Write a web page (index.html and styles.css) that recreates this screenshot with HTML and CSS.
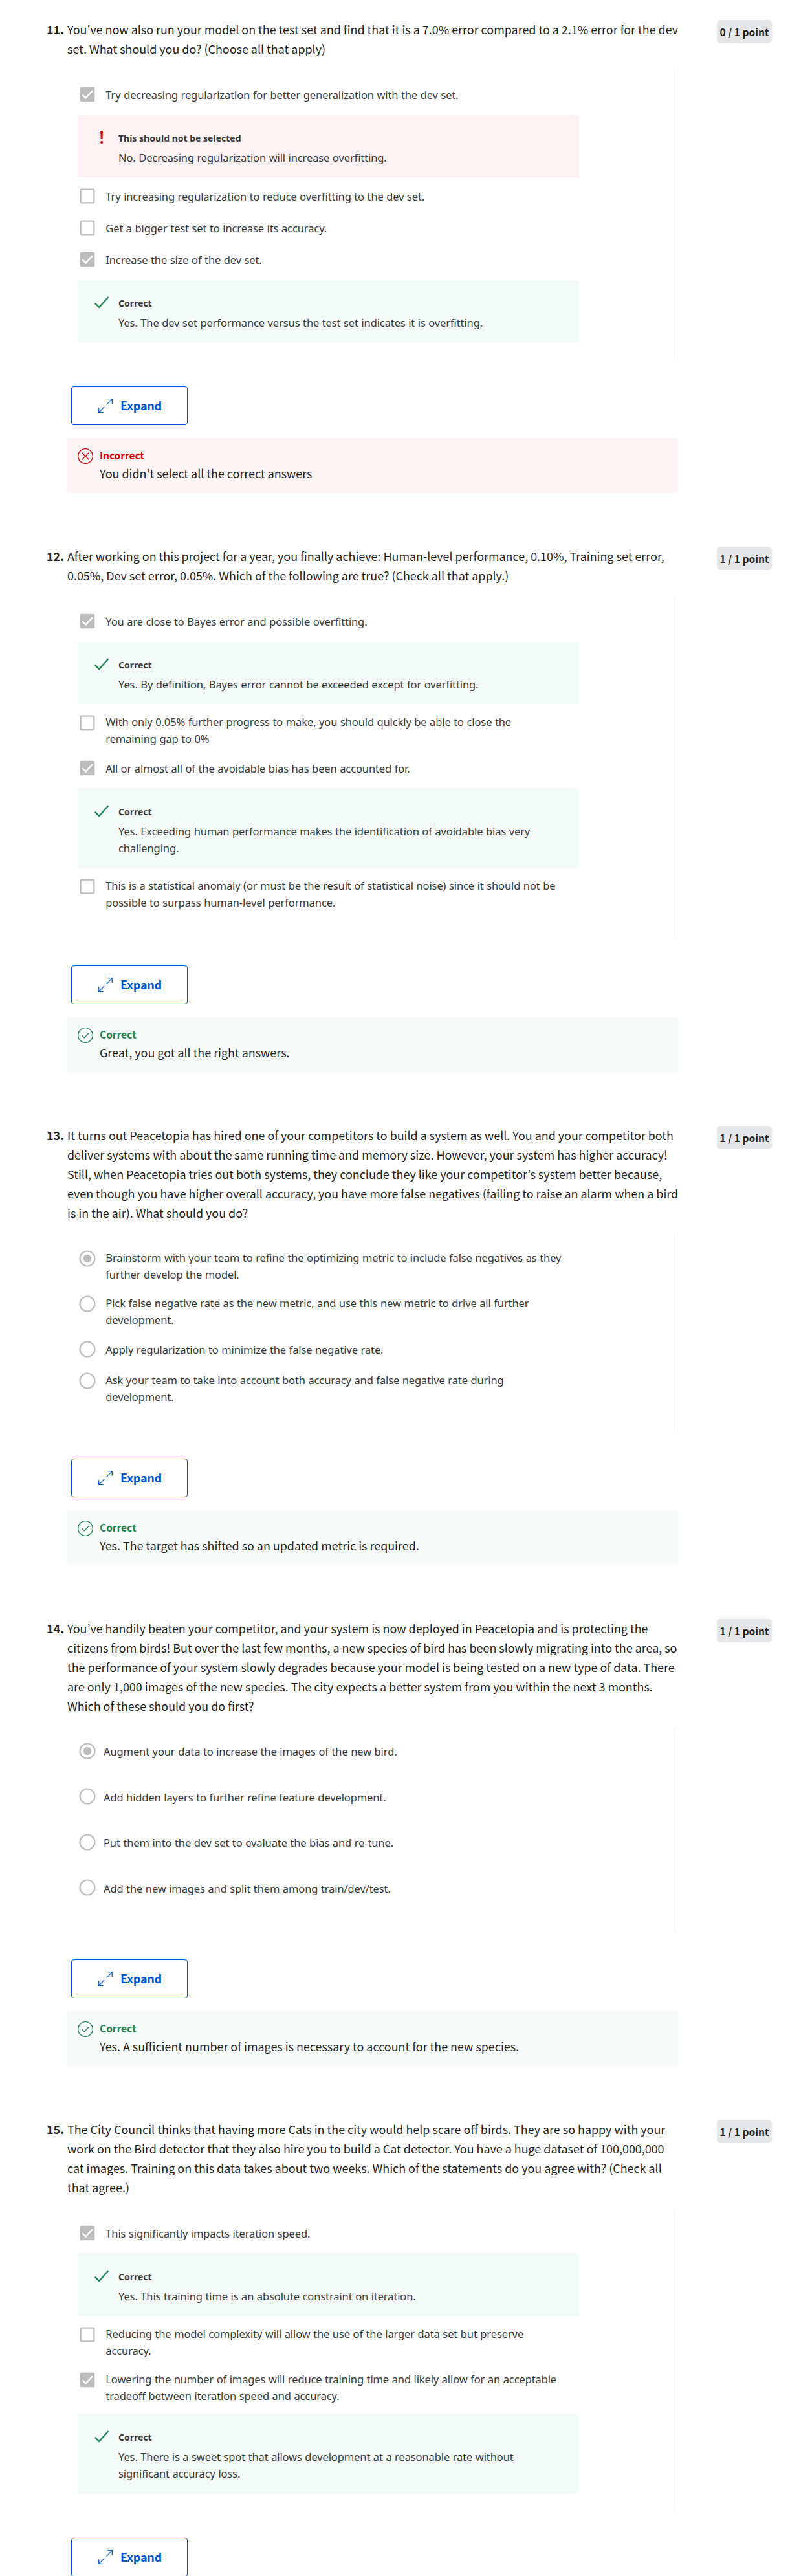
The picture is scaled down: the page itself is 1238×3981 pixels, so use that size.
FILE: index.html
```html
<!DOCTYPE html>
<html lang="en">
<head>
<meta charset="utf-8">
<title>Quiz feedback</title>
<link rel="stylesheet" href="styles.css">
</head>
<body>
<svg class="defs" aria-hidden="true">
  <symbol id="box-on" viewBox="0 0 24 24"><rect x=".7" y=".7" width="22.6" height="22.6" rx="2" fill="#bdbdbd"/><path d="M4.2 12.4l5.3 5L19.8 6.3" fill="none" stroke="#fff" stroke-width="2.5"/></symbol>
  <symbol id="box-off" viewBox="0 0 24 24"><rect x="1.7" y="1.7" width="20.6" height="20.6" rx="1.4" fill="#fff" stroke="#bdbdbd" stroke-width="2.2"/></symbol>
  <symbol id="radio-on" viewBox="0 0 26 26"><circle cx="13" cy="13" r="11.5" fill="none" stroke="#bdbdbd" stroke-width="2.2"/><circle cx="13" cy="13" r="6.2" fill="#bdbdbd"/></symbol>
  <symbol id="radio-off" viewBox="0 0 26 26"><circle cx="13" cy="13" r="11.5" fill="none" stroke="#bdbdbd" stroke-width="2.2"/></symbol>
  <symbol id="tick" viewBox="0 0 24 20"><path d="M1.8 11.6l6.5 6.4L22.4 2" fill="none" stroke="#1f8354" stroke-width="2.3"/></symbol>
  <symbol id="bang" viewBox="0 0 24 20"><path d="M10.2 0h3.8l-.5 13h-2.8z" fill="#d30001"/><circle cx="12.1" cy="18" r="2" fill="#d30001"/></symbol>
  <symbol id="expand" viewBox="0 0 22 22"><path d="M.7 14.3v7h7M.9 21.1L9.2 12.8M14.3.7h7v7M21.1.9L12.6 9.4" fill="none" stroke="#0056d2" stroke-width="1.25"/></symbol>
  <symbol id="ok" viewBox="0 0 24 24"><circle cx="12" cy="12" r="11.3" fill="none" stroke="#1f8354" stroke-width="1.3"/><path d="M6.8 12.6l3.5 3.2 7-7.4" fill="none" stroke="#1f8354" stroke-width="1.3"/></symbol>
  <symbol id="bad" viewBox="0 0 24 24"><circle cx="12" cy="12" r="11.3" fill="none" stroke="#d30001" stroke-width="1.3"/><path d="M6.8 6.8l10.4 10.4M17.2 6.8L6.8 17.2" fill="none" stroke="#d30001" stroke-width="1.3"/></symbol>
</svg>
<main class="quiz">

<section class="question">
  <header class="prompt">
    <b class="number">11.</b>
    <p class="stem">You’ve now also run your model on the test set and find that it is a 7.0% error compared to a 2.1% error for the dev<br>set. What should you do? (Choose all that apply)</p>
    <span class="points">0 / 1 point</span>
  </header>
  <div class="answers answers-11">
    <div class="option"><svg class="mark"><use href="#box-on"/></svg><p>Try decreasing regularization for better generalization with the dev set.</p></div>
    <div class="note note-bad"><svg class="note-icon"><use href="#bang"/></svg><div><h4>This should not be selected</h4><p>No. Decreasing regularization will increase overfitting.</p></div></div>
    <div class="option"><svg class="mark"><use href="#box-off"/></svg><p>Try increasing regularization to reduce overfitting to the dev set.</p></div>
    <div class="option"><svg class="mark"><use href="#box-off"/></svg><p>Get a bigger test set to increase its accuracy.</p></div>
    <div class="option"><svg class="mark"><use href="#box-on"/></svg><p>Increase the size of the dev set.</p></div>
    <div class="note"><svg class="note-icon"><use href="#tick"/></svg><div><h4>Correct</h4><p>Yes. The dev set performance versus the test set indicates it is overfitting.</p></div></div>
  </div>
  <button class="expand"><svg class="expand-icon"><use href="#expand"/></svg><span>Expand</span></button>
  <div class="result result-bad"><svg class="result-icon"><use href="#bad"/></svg><div><h3>Incorrect</h3><p>You didn't select all the correct answers</p></div></div>
</section>

<section class="question">
  <header class="prompt">
    <b class="number">12.</b>
    <p class="stem">After working on this project for a year, you finally achieve: Human-level performance, 0.10%, Training set error,<br>0.05%, Dev set error, 0.05%. Which of the following are true? (Check all that apply.)</p>
    <span class="points">1 / 1 point</span>
  </header>
  <div class="answers answers-12">
    <div class="option"><svg class="mark"><use href="#box-on"/></svg><p>You are close to Bayes error and possible overfitting.</p></div>
    <div class="note"><svg class="note-icon"><use href="#tick"/></svg><div><h4>Correct</h4><p>Yes. By definition, Bayes error cannot be exceeded except for overfitting.</p></div></div>
    <div class="option option-two"><svg class="mark"><use href="#box-off"/></svg><p>With only 0.05% further progress to make, you should quickly be able to close the<br>remaining gap to 0%</p></div>
    <div class="option"><svg class="mark"><use href="#box-on"/></svg><p>All or almost all of the avoidable bias has been accounted for.</p></div>
    <div class="note"><svg class="note-icon"><use href="#tick"/></svg><div><h4>Correct</h4><p>Yes. Exceeding human performance makes the identification of avoidable bias very<br>challenging.</p></div></div>
    <div class="option option-two"><svg class="mark"><use href="#box-off"/></svg><p>This is a statistical anomaly (or must be the result of statistical noise) since it should not be<br>possible to surpass human-level performance.</p></div>
  </div>
  <button class="expand"><svg class="expand-icon"><use href="#expand"/></svg><span>Expand</span></button>
  <div class="result"><svg class="result-icon"><use href="#ok"/></svg><div><h3>Correct</h3><p>Great, you got all the right answers.</p></div></div>
</section>

<section class="question">
  <header class="prompt">
    <b class="number">13.</b>
    <p class="stem">It turns out Peacetopia has hired one of your competitors to build a system as well. You and your competitor both<br>deliver systems with about the same running time and memory size. However, your system has higher accuracy!<br>Still, when Peacetopia tries out both systems, they conclude they like your competitor’s system better because,<br>even though you have higher overall accuracy, you have more false negatives (failing to raise an alarm when a bird<br>is in the air). What should you do?</p>
    <span class="points">1 / 1 point</span>
  </header>
  <div class="answers answers-13">
    <div class="option option-two"><svg class="mark radio"><use href="#radio-on"/></svg><p>Brainstorm with your team to refine the optimizing metric to include false negatives as they<br>further develop the model.</p></div>
    <div class="option option-two"><svg class="mark radio"><use href="#radio-off"/></svg><p>Pick false negative rate as the new metric, and use this new metric to drive all further<br>development.</p></div>
    <div class="option"><svg class="mark radio"><use href="#radio-off"/></svg><p>Apply regularization to minimize the false negative rate.</p></div>
    <div class="option option-two"><svg class="mark radio"><use href="#radio-off"/></svg><p>Ask your team to take into account both accuracy and false negative rate during<br>development.</p></div>
  </div>
  <button class="expand"><svg class="expand-icon"><use href="#expand"/></svg><span>Expand</span></button>
  <div class="result"><svg class="result-icon"><use href="#ok"/></svg><div><h3>Correct</h3><p>Yes. The target has shifted so an updated metric is required.</p></div></div>
</section>

<section class="question">
  <header class="prompt">
    <b class="number">14.</b>
    <p class="stem">You’ve handily beaten your competitor, and your system is now deployed in Peacetopia and is protecting the<br>citizens from birds! But over the last few months, a new species of bird has been slowly migrating into the area, so<br>the performance of your system slowly degrades because your model is being tested on a new type of data. There<br>are only 1,000 images of the new species. The city expects a better system from you within the next 3 months.<br>Which of these should you do first?</p>
    <span class="points">1 / 1 point</span>
  </header>
  <div class="answers answers-14">
    <div class="option"><svg class="mark radio"><use href="#radio-on"/></svg><p>Augment your data to increase the images of the new bird.</p></div>
    <div class="option"><svg class="mark radio"><use href="#radio-off"/></svg><p>Add hidden layers to further refine feature development.</p></div>
    <div class="option"><svg class="mark radio"><use href="#radio-off"/></svg><p>Put them into the dev set to evaluate the bias and re-tune.</p></div>
    <div class="option"><svg class="mark radio"><use href="#radio-off"/></svg><p>Add the new images and split them among train/dev/test.</p></div>
  </div>
  <button class="expand"><svg class="expand-icon"><use href="#expand"/></svg><span>Expand</span></button>
  <div class="result"><svg class="result-icon"><use href="#ok"/></svg><div><h3>Correct</h3><p>Yes. A sufficient number of images is necessary to account for the new species.</p></div></div>
</section>

<section class="question">
  <header class="prompt">
    <b class="number">15.</b>
    <p class="stem">The City Council thinks that having more Cats in the city would help scare off birds. They are so happy with your<br>work on the Bird detector that they also hire you to build a Cat detector. You have a huge dataset of 100,000,000<br>cat images. Training on this data takes about two weeks. Which of the statements do you agree with? (Check all<br>that agree.)</p>
    <span class="points">1 / 1 point</span>
  </header>
  <div class="answers answers-15">
    <div class="option"><svg class="mark"><use href="#box-on"/></svg><p>This significantly impacts iteration speed.</p></div>
    <div class="note"><svg class="note-icon"><use href="#tick"/></svg><div><h4>Correct</h4><p>Yes. This training time is an absolute constraint on iteration.</p></div></div>
    <div class="option option-two"><svg class="mark"><use href="#box-off"/></svg><p>Reducing the model complexity will allow the use of the larger data set but preserve<br>accuracy.</p></div>
    <div class="option option-two"><svg class="mark"><use href="#box-on"/></svg><p>Lowering the number of images will reduce training time and likely allow for an acceptable<br>tradeoff between iteration speed and accuracy.</p></div>
    <div class="note"><svg class="note-icon"><use href="#tick"/></svg><div><h4>Correct</h4><p>Yes. There is a sweet spot that allows development at a reasonable rate without<br>significant accuracy loss.</p></div></div>
  </div>
  <button class="expand"><svg class="expand-icon"><use href="#expand"/></svg><span>Expand</span></button>
</section>

</main>
</body>
</html>
```
FILE: styles.css
```css
* { box-sizing: border-box; }
body { margin: 0; background: #fff; color: #1f1f1f; font-family: "Noto Sans CJK KR", "Noto Sans", sans-serif; }
h3, h4, p { margin: 0; }
.defs { display: none; }

.quiz { height: 3981px; padding: 31px 45px 0 72px; overflow: hidden; }
.question { margin-bottom: 83px; }

/* Prompt row: number, question text, score badge */
.prompt { display: grid; grid-template-columns: 32px 1fr 85px; align-items: start; margin-bottom: 16px; }
.number { margin-top: -1px; font-size: 18px; line-height: 30px; }
.stem { margin: -1px 0 1px; font-size: 17.92px; line-height: 30px; white-space: nowrap; }
.points { height: 36px; padding-top: 1px; border-radius: 5px; background: #e5e7e8; font-size: 15.6px; font-weight: 700; line-height: 35px; text-align: center; white-space: nowrap; }

/* Answer list */
.answers { width: 971px; padding: 14px 0 0 48px; border-right: 1px solid #f3f3f3; color: #373a3c; font-family: "Noto Sans", sans-serif; font-size: 16.5px; letter-spacing: -.11px; word-spacing: .4px; line-height: 26px; white-space: nowrap; }
.answers-11 { height: 450px; }
.answers-12 { height: 531px; }
.answers-13 { height: 308px; }
.answers-14 { height: 320px; }
.answers-15 { height: 470px; }
.option { display: flex; align-items: flex-start; height: 49px; padding: 12px 0 0 3px; }
.option p { padding-top: 1px; }
.option-two { height: 70px; padding-top: 10px; }
.mark { flex: none; width: 24px; height: 24px; margin: .5px 16.3px 0 0; }
.option-two .mark { margin-top: 2.5px; }
.radio { width: 26px; height: 26px; margin: -.5px 15.3px 0 -1px; }
.option-two .radio { margin-top: 1.5px; }
.answers-14 { padding-top: 13px; }
.answers-14 .option { height: 70.5px; }
.answers-14 .radio { margin-right: 12px; }

.note { display: flex; width: 775px; margin: 7.5px 0 4px; padding: 26px 0 17.2px 25px; background: #f4faf8; }
.note-bad { background: #fff2f4; }
.note-icon { flex: none; width: 24px; height: 20px; margin: -2px 14px 0 0; }
.note h4 { margin-bottom: 7.4px; font-size: 14px; letter-spacing: 0; word-spacing: 0; line-height: 20px; }

/* Expand button and overall result */
.expand { display: flex; align-items: center; width: 180px; height: 60px; margin: 40px 0 20px 38px; padding: 0 0 0 41px; border: 1px solid #0056d2; border-radius: 4px; background: #fff; color: #0056d2; font: 700 18px/26px "Noto Sans CJK KR", sans-serif; letter-spacing: -.25px; }
.expand span { padding-bottom: 2px; }
.expand-icon { width: 22px; height: 22px; margin-right: 12px; }
.result { display: flex; width: 944px; height: 85px; margin-left: 32px; padding: 14px 0 0 15.5px; background: #f7fbf9; }
.result-bad { background: #fdf4f5; }
.result-icon { flex: none; width: 24px; height: 24px; margin: 1.5px 10.5px 0 0; }
.result h3 { color: #1f8354; font-size: 15.6px; letter-spacing: -.1px; line-height: 24px; }
.result-bad h3 { color: #d30001; }
.result p { margin-top: 1px; font-size: 17.9px; line-height: 30px; white-space: nowrap; }
```
